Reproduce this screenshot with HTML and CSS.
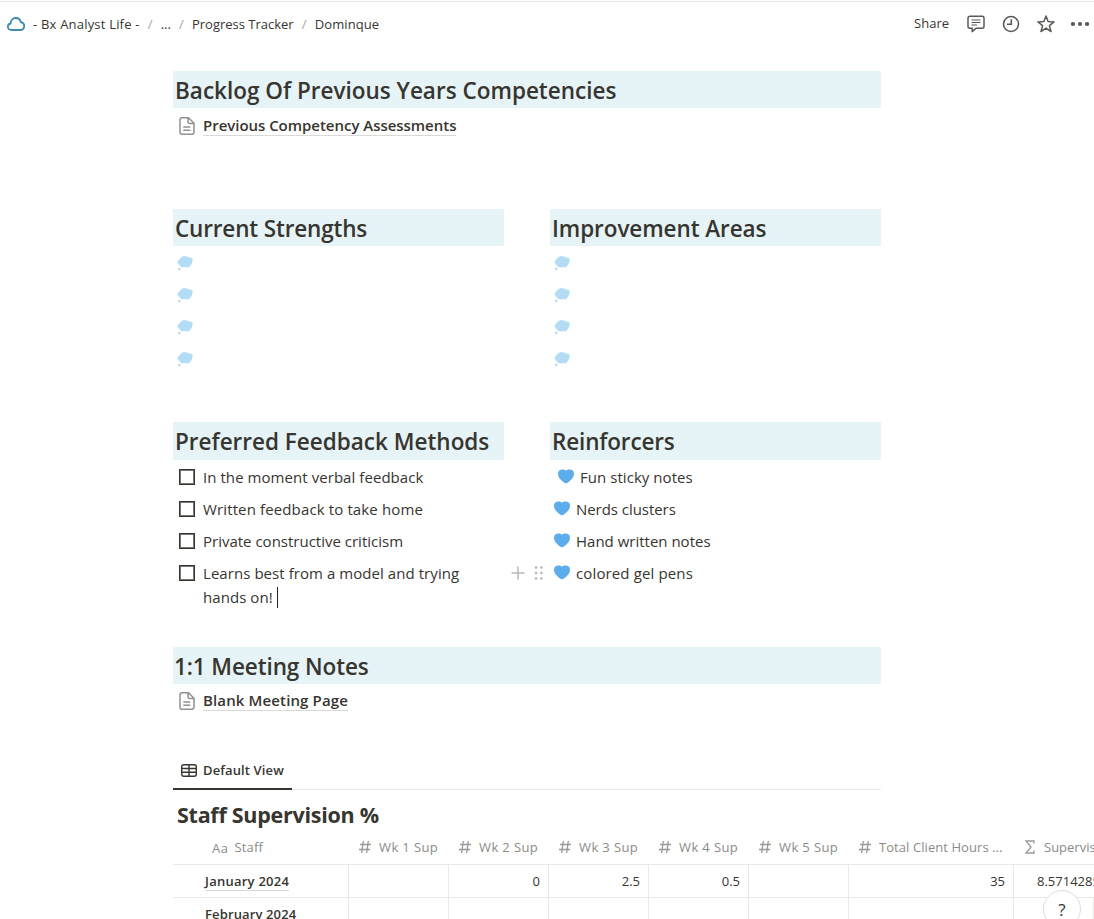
FILE: index.html
```html
<!DOCTYPE html>
<html lang="en">
<head>
<meta charset="utf-8">
<title>Dominque</title>
<link rel="stylesheet" href="styles.css">
</head>
<body>
<svg class="defs" width="0" height="0" aria-hidden="true">
  <symbol id="page" viewBox="0 0 16 18"><path d="M3 .8h6.500L15 6.200v9a2 2 0 0 1-2 2H3a2 2 0 0 1-2-2V2.800a2 2 0 0 1 2-2ZM9 1v3.500a2 2 0 0 0 2 2h3.500M4.300 10h7M4.300 13.300h7" fill="none" stroke="#91918e" stroke-width="1.500"/></symbol>
  <symbol id="thought" viewBox="0 0 16 15"><path d="M.5 5.800 2.500 3 5 .8 7 0 11 .8l1 .8 3.200.4L15.700 5l-1.400 3.800-1.300 1-.6 1.500H4.500L3 9.500 1.200 8Z" fill="#b3dcf7"/><path d="M1.300 11.800h2v2.400h-2Z" fill="#b9d3e2"/></symbol>
  <symbol id="heart" viewBox="0 0 16 15"><path d="M8 14.500C5.500 13.500 0 9.500 0 4.700 0 1.800 1.900.5 4.200.5 6 .5 7.200.9 8 1.600c.8-.7 2-1.100 3.800-1.100C14.100.5 16 1.800 16 4.700c0 4.800-5.500 8.800-8 9.800Z" fill="#5dadec"/></symbol>
  <symbol id="hash" viewBox="0 0 12 14"><path d="M4.300 1 2.700 13M9.300 1 7.700 13M1 4.500h11M0 9.500h11" fill="none" stroke="#999996" stroke-width="1.300"/></symbol>
</svg>
<header class="topbar">
  <svg class="cloud" width="18" height="14" viewBox="0 0 18 14"><path d="M4.600 13C2.500 13 .9 11.700.9 9.700c0-1.700 1.100-2.900 2.700-3.200C3.700 3.300 5.900 1 8.800 1c2.700 0 4.500 1.600 5 4.200 2.100.3 3.400 1.800 3.400 3.800 0 2.300-1.600 4-4 4Z" fill="none" stroke="#4089b2" stroke-width="1.800"/></svg>
  <nav class="crumbs"><span class="c1">- Bx Analyst Life -</span><i>/</i><span class="c2">...</span><i>/</i><span class="c3">Progress Tracker</span><i>/</i><span class="c4">Dominque</span></nav>
  <div class="actions">
    <span class="share">Share</span>
    <svg width="18" height="18" viewBox="0 0 18 18" fill="none" stroke="#5a5955" stroke-width="1.500"><path d="M3 1.200h12a2 2 0 0 1 2 2v8a2 2 0 0 1-2 2H9L5.200 16.600V13.200H3a2 2 0 0 1-2-2v-8a2 2 0 0 1 2-2Z" stroke-linejoin="round"/><path d="M4.500 5h9M4.500 7.500h9M4.500 10H10" stroke-width="1.100"/></svg>
    <svg width="18" height="18" viewBox="0 0 18 18" fill="none" stroke="#5a5955" stroke-width="1.600"><circle cx="9" cy="9" r="7.500"/><path d="M9.300 4.300V9.300H5"/></svg>
    <svg width="18" height="18" viewBox="0 0 18 18" fill="none" stroke="#5a5955" stroke-width="1.500" stroke-linejoin="round"><path d="m9 1 2.100 5.600 6 .3-4.700 3.700 1.600 5.900L9 13.200l-5 3.300 1.600-5.900L.9 6.900l6-.3Z"/></svg>
    <svg class="dots" width="18" height="18" viewBox="0 0 18 18" fill="#5a5955"><circle cx="2" cy="9" r="2.100"/><circle cx="9" cy="9" r="2.100"/><circle cx="16" cy="9" r="2.100"/></svg>
  </div>
</header>
<main class="content">
  <section class="backlog">
    <h2><span class="h-backlog">Backlog Of Previous Years Competencies</span></h2>
    <div class="pagelink"><svg width="16" height="18"><use href="#page"/></svg><a class="l-prev">Previous Competency Assessments</a></div>
  </section>
  <section class="columns strengths">
    <div>
      <h2><span class="h-current">Current Strengths</span></h2>
      <ul class="thoughts"><li><svg><use href="#thought"/></svg></li><li><svg><use href="#thought"/></svg></li><li><svg><use href="#thought"/></svg></li><li><svg><use href="#thought"/></svg></li></ul>
    </div>
    <div>
      <h2><span class="h-improve">Improvement Areas</span></h2>
      <ul class="thoughts"><li><svg><use href="#thought"/></svg></li><li><svg><use href="#thought"/></svg></li><li><svg><use href="#thought"/></svg></li><li><svg><use href="#thought"/></svg></li></ul>
    </div>
  </section>
  <section class="columns feedback">
    <div>
      <h2 class="tall"><span class="h-pref">Preferred Feedback Methods</span></h2>
      <ul class="todos">
        <li><b class="box"></b><span class="t1">In the moment verbal feedback</span></li>
        <li><b class="box"></b><span class="t2">Written feedback to take home</span></li>
        <li><b class="box"></b><span class="t3">Private constructive criticism</span></li>
        <li><b class="box"></b><span class="t4">Learns best from a model and trying<br>hands on! <b class="caret"></b></span></li>
      </ul>
    </div>
    <div>
      <h2 class="tall"><span class="h-rein">Reinforcers</span></h2>
      <ul class="hearts">
        <li class="indent"><svg><use href="#heart"/></svg><span class="r1">Fun sticky notes</span></li>
        <li><svg><use href="#heart"/></svg><span class="r2">Nerds clusters</span></li>
        <li><svg><use href="#heart"/></svg><span class="r3">Hand written notes</span></li>
        <li class="hovered"><svg class="handle" viewBox="0 0 34 16"><path d="M.5 8h13M7 1.500v13" stroke="#b8b8b6" stroke-width="1.500"/><g fill="#b5b5b2"><circle cx="25" cy="2.500" r="1.300"/><circle cx="30.500" cy="2.500" r="1.300"/><circle cx="25" cy="8" r="1.300"/><circle cx="30.500" cy="8" r="1.300"/><circle cx="25" cy="13.500" r="1.300"/><circle cx="30.500" cy="13.500" r="1.300"/></g></svg><svg><use href="#heart"/></svg><span class="r4">colored gel pens</span></li>
      </ul>
    </div>
  </section>
  <section class="meeting">
    <h2><span class="h-meet">1:1 Meeting Notes</span></h2>
    <div class="pagelink"><svg width="16" height="18"><use href="#page"/></svg><a class="l-blank">Blank Meeting Page</a></div>
  </section>
  <section class="database">
    <div class="tabs"><div class="tab"><svg width="16" height="13" viewBox="0 0 16 13" fill="none" stroke="#37352f" stroke-width="1.400"><rect x=".7" y=".7" width="14.600" height="11.600" rx="2"/><path d="M1 4.500h14M1 8.300h14M8 1v11"/></svg><span class="tabname">Default View</span></div></div>
    <h3><span class="h-staff">Staff Supervision %</span></h3>
    <div class="grid head">
      <div class="first"><span class="aa">Aa</span><span class="n-staff">Staff</span></div>
      <div><svg><use href="#hash"/></svg><span class="wk">Wk 1 Sup</span></div>
      <div><svg><use href="#hash"/></svg><span class="wk">Wk 2 Sup</span></div>
      <div><svg><use href="#hash"/></svg><span class="wk">Wk 3 Sup</span></div>
      <div><svg><use href="#hash"/></svg><span class="wk">Wk 4 Sup</span></div>
      <div><svg><use href="#hash"/></svg><span class="wk">Wk 5 Sup</span></div>
      <div><svg><use href="#hash"/></svg><span class="n-total">Total Client Hours ...</span></div>
      <div class="last"><svg viewBox="0 0 12 14"><path d="M10 3.500V1H2l5 6-5 6h8v-2.500" fill="none" stroke="#999996" stroke-width="1.300"/></svg><span class="n-sup">Supervis</span></div>
    </div>
    <div class="grid row"><div class="name"><a class="jan">January 2024</a></div><div></div><div>0</div><div>2.5</div><div>0.5</div><div></div><div>35</div><div class="pct">8.571428571</div></div>
    <div class="grid row"><div class="name"><a class="feb">February 2024</a></div><div></div><div></div><div></div><div></div><div></div><div></div><div></div></div>
  </section>
</main>
<div class="help">?</div>
</body>
</html>
```
FILE: styles.css
```css
* { box-sizing: border-box; }
body { margin: 0; width: 1094px; height: 919px; overflow: hidden; position: relative; background: #fff; color: #37352f; font-family: "Open Sans", "Noto Sans", sans-serif; font-size: 15px; }
span, a { white-space: nowrap; }
ul { list-style: none; margin: 0; padding: 0; }
svg { flex: none; display: block; }
.defs { position: absolute; }
.topbar { height: 45px; border-top: 1px solid #e2e3e3; margin-top: 1px; padding: 0 5px 0 7px; display: flex; align-items: center; font-size: 13px; }
.crumbs { display: flex; align-items: center; margin-left: 8px; }
.c1 { letter-spacing: .2px; }
.c4 { letter-spacing: .1px; }
.crumbs i { font-style: normal; color: #a5a5a2; width: 21px; text-align: center; }
.actions { margin-left: auto; display: flex; align-items: center; gap: 17px; }
.share { margin: -2px 1px 0 0; }
.actions .dots { margin-left: -1px; }
.content { width: 708px; margin: 25px 0 0 173px; }
h2, h3 { margin: 0; line-height: 37px; font-size: 22.500px; }
h2 { height: 37px; background: #e6f3f7; padding-left: 2px; padding-top: 1px; font-weight: 600; }
h2.tall { height: 38px; }
.h-current { letter-spacing: -.16px; }
.h-improve { letter-spacing: -.08px; }
.h-rein { letter-spacing: -.15px; }
.h-meet { margin-left: -1px; letter-spacing: -.1px; }
.backlog { height: 138px; }
.pagelink { display: flex; align-items: center; height: 36px; padding-left: 6px; gap: 8px; font-weight: 600; letter-spacing: -.03px; }
.pagelink a { line-height: 19px; border-bottom: 1px solid #d9d9d7; margin-top: -1px; }
.meeting .pagelink { height: 34px; letter-spacing: .13px; }
.columns { display: grid; grid-template-columns: 331px 331px; gap: 46px; }
.strengths { height: 213px; }
.feedback { height: 225px; }
.thoughts li { height: 32px; padding: 10px 0 0 4px; }
.thoughts svg { width: 16px; height: 15px; }
.todos li, .hearts li { line-height: 24px; padding: 4px 0; display: flex; }
.todos { padding-top: 1px; }
.t1, .t4 { letter-spacing: .06px; }
.t2 { letter-spacing: .13px; }
.r1 { letter-spacing: .05px; }
.r2 { letter-spacing: -.05px; }
.r4 { letter-spacing: .13px; }
.hearts { padding-top: 1px; }
.box { width: 16px; height: 16px; border: 1.500px solid #37352f; outline: .5px solid #77756f; outline-offset: -2px; margin: 4px 8px 0 6px; flex: none; }
.caret { display: inline-block; width: 1px; height: 21px; background: #222; vertical-align: -5px; }
.hearts li { padding-left: 4px; position: relative; gap: 6px; }
.hearts li svg { width: 16px; height: 15px; margin-top: 3.500px; }
.hearts .indent { padding-left: 8px; }
.hearts li .handle { position: absolute; left: -39px; top: 4px; width: 34px; height: 16px; margin-top: 4px; }
.meeting { height: 103px; }
.tabs { height: 40px; border-bottom: 1px solid #e9e9e7; }
.tab { width: 119px; height: 40px; border-bottom: 2px solid #37352f; display: flex; align-items: center; gap: 6px; padding: 2px 0 0 8px; font-size: 13px; font-weight: 600; letter-spacing: .12px; }
h3 { padding: 6px 0 0 4px; height: 41px; font-weight: 700; font-size: 21.500px; letter-spacing: -.27px; }
.grid { display: grid; grid-template-columns: 176px repeat(5, 100px) 165px 80px; width: 921px; border-bottom: 1px solid #e9e9e7; height: 33px; }
.head { height: 34px; color: #8b8b88; font-size: 13px; padding-bottom: 1px; }
.head > div { display: flex; align-items: center; gap: 8px; padding-left: 10px; overflow: hidden; }
.head span { margin-top: -1px; }
.wk { letter-spacing: .38px; }
.n-staff { letter-spacing: .15px; }
.n-total { letter-spacing: .07px; }
.head svg { width: 12px; height: 14px; }
.head .first { padding-left: 39px; gap: 6px; }
.head .last { padding-left: 10px; gap: 8px; }
.head .aa { margin-top: 1px; letter-spacing: .5px; }
.row > div { border-right: 1px solid #e9e9e7; padding-right: 8px; text-align: right; line-height: 32px; font-size: 13px; overflow: hidden; }
.row .name { text-align: left; padding-left: 32px; font-weight: 600; letter-spacing: .25px; }
.row .name .feb { letter-spacing: .13px; }
.row .name a { border-bottom: 1px solid #d9d9d7; }
.row .pct { text-align: left; padding: 0 0 0 23px; border-right: 0; }
.help { position: absolute; left: 1043px; top: 890px; width: 38px; height: 38px; border: 1px solid #dededc; border-radius: 50%; background: #fff; text-align: center; line-height: 37px; font-size: 17px; }
```
